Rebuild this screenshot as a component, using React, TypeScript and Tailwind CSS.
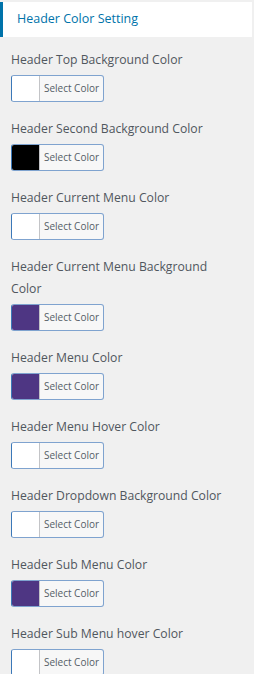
const settings = [
  { label: "Header Top Background Color", color: "#ffffff" },
  { label: "Header Second Background Color", color: "#000000" },
  { label: "Header Current Menu Color", color: "#ffffff" },
  { label: "Header Current Menu Background Color", color: "#4e3683" },
  { label: "Header Menu Color", color: "#4e3683" },
  { label: "Header Menu Hover Color", color: "#ffffff" },
  { label: "Header Dropdown Background Color", color: "#ffffff" },
  { label: "Header Sub Menu Color", color: "#4e3683" },
  { label: "Header Sub Menu hover Color", color: "#ffffff" },
];

const ColorButton = ({ color }: { color: string }) => {
  return (
    <button
      type="button"
      className="flex h-[27px] w-[93px] overflow-hidden rounded-[3px] border border-[#7fa3cf] border-l-[#3b78b8] bg-[#f7f7f7]"
    >
      <span className="h-full w-[28px] border-r border-[#c3c4c7]" style={{ backgroundColor: color }} />
      <span className="flex h-full flex-1 items-center justify-center text-[10px] text-[#555d66]">
        Select Color
      </span>
    </button>
  );
};

export default function App() {
  return (
    <div className="min-h-[674px] w-[254px] bg-[#f0f0f0] pt-[2px] font-['Open_Sans',sans-serif]">
      {/* section title */}
      <div className="mr-[2px] flex h-[35px] items-center border-l-[3px] border-[#0073aa] bg-white pl-[14px]">
        <h3 className="text-[12.5px] text-[#0073aa]">Header Color Setting</h3>
      </div>

      <div className="flex flex-col px-[11px] pt-[12px]">
        {settings.map((s) => (
          <div key={s.label} className="mb-[16px] flex flex-col gap-[4px]">
            <label className="pr-[10px] text-[12.2px] leading-[22px] text-[#50575e]">{s.label}</label>
            <ColorButton color={s.color} />
          </div>
        ))}
      </div>
    </div>
  );
}
